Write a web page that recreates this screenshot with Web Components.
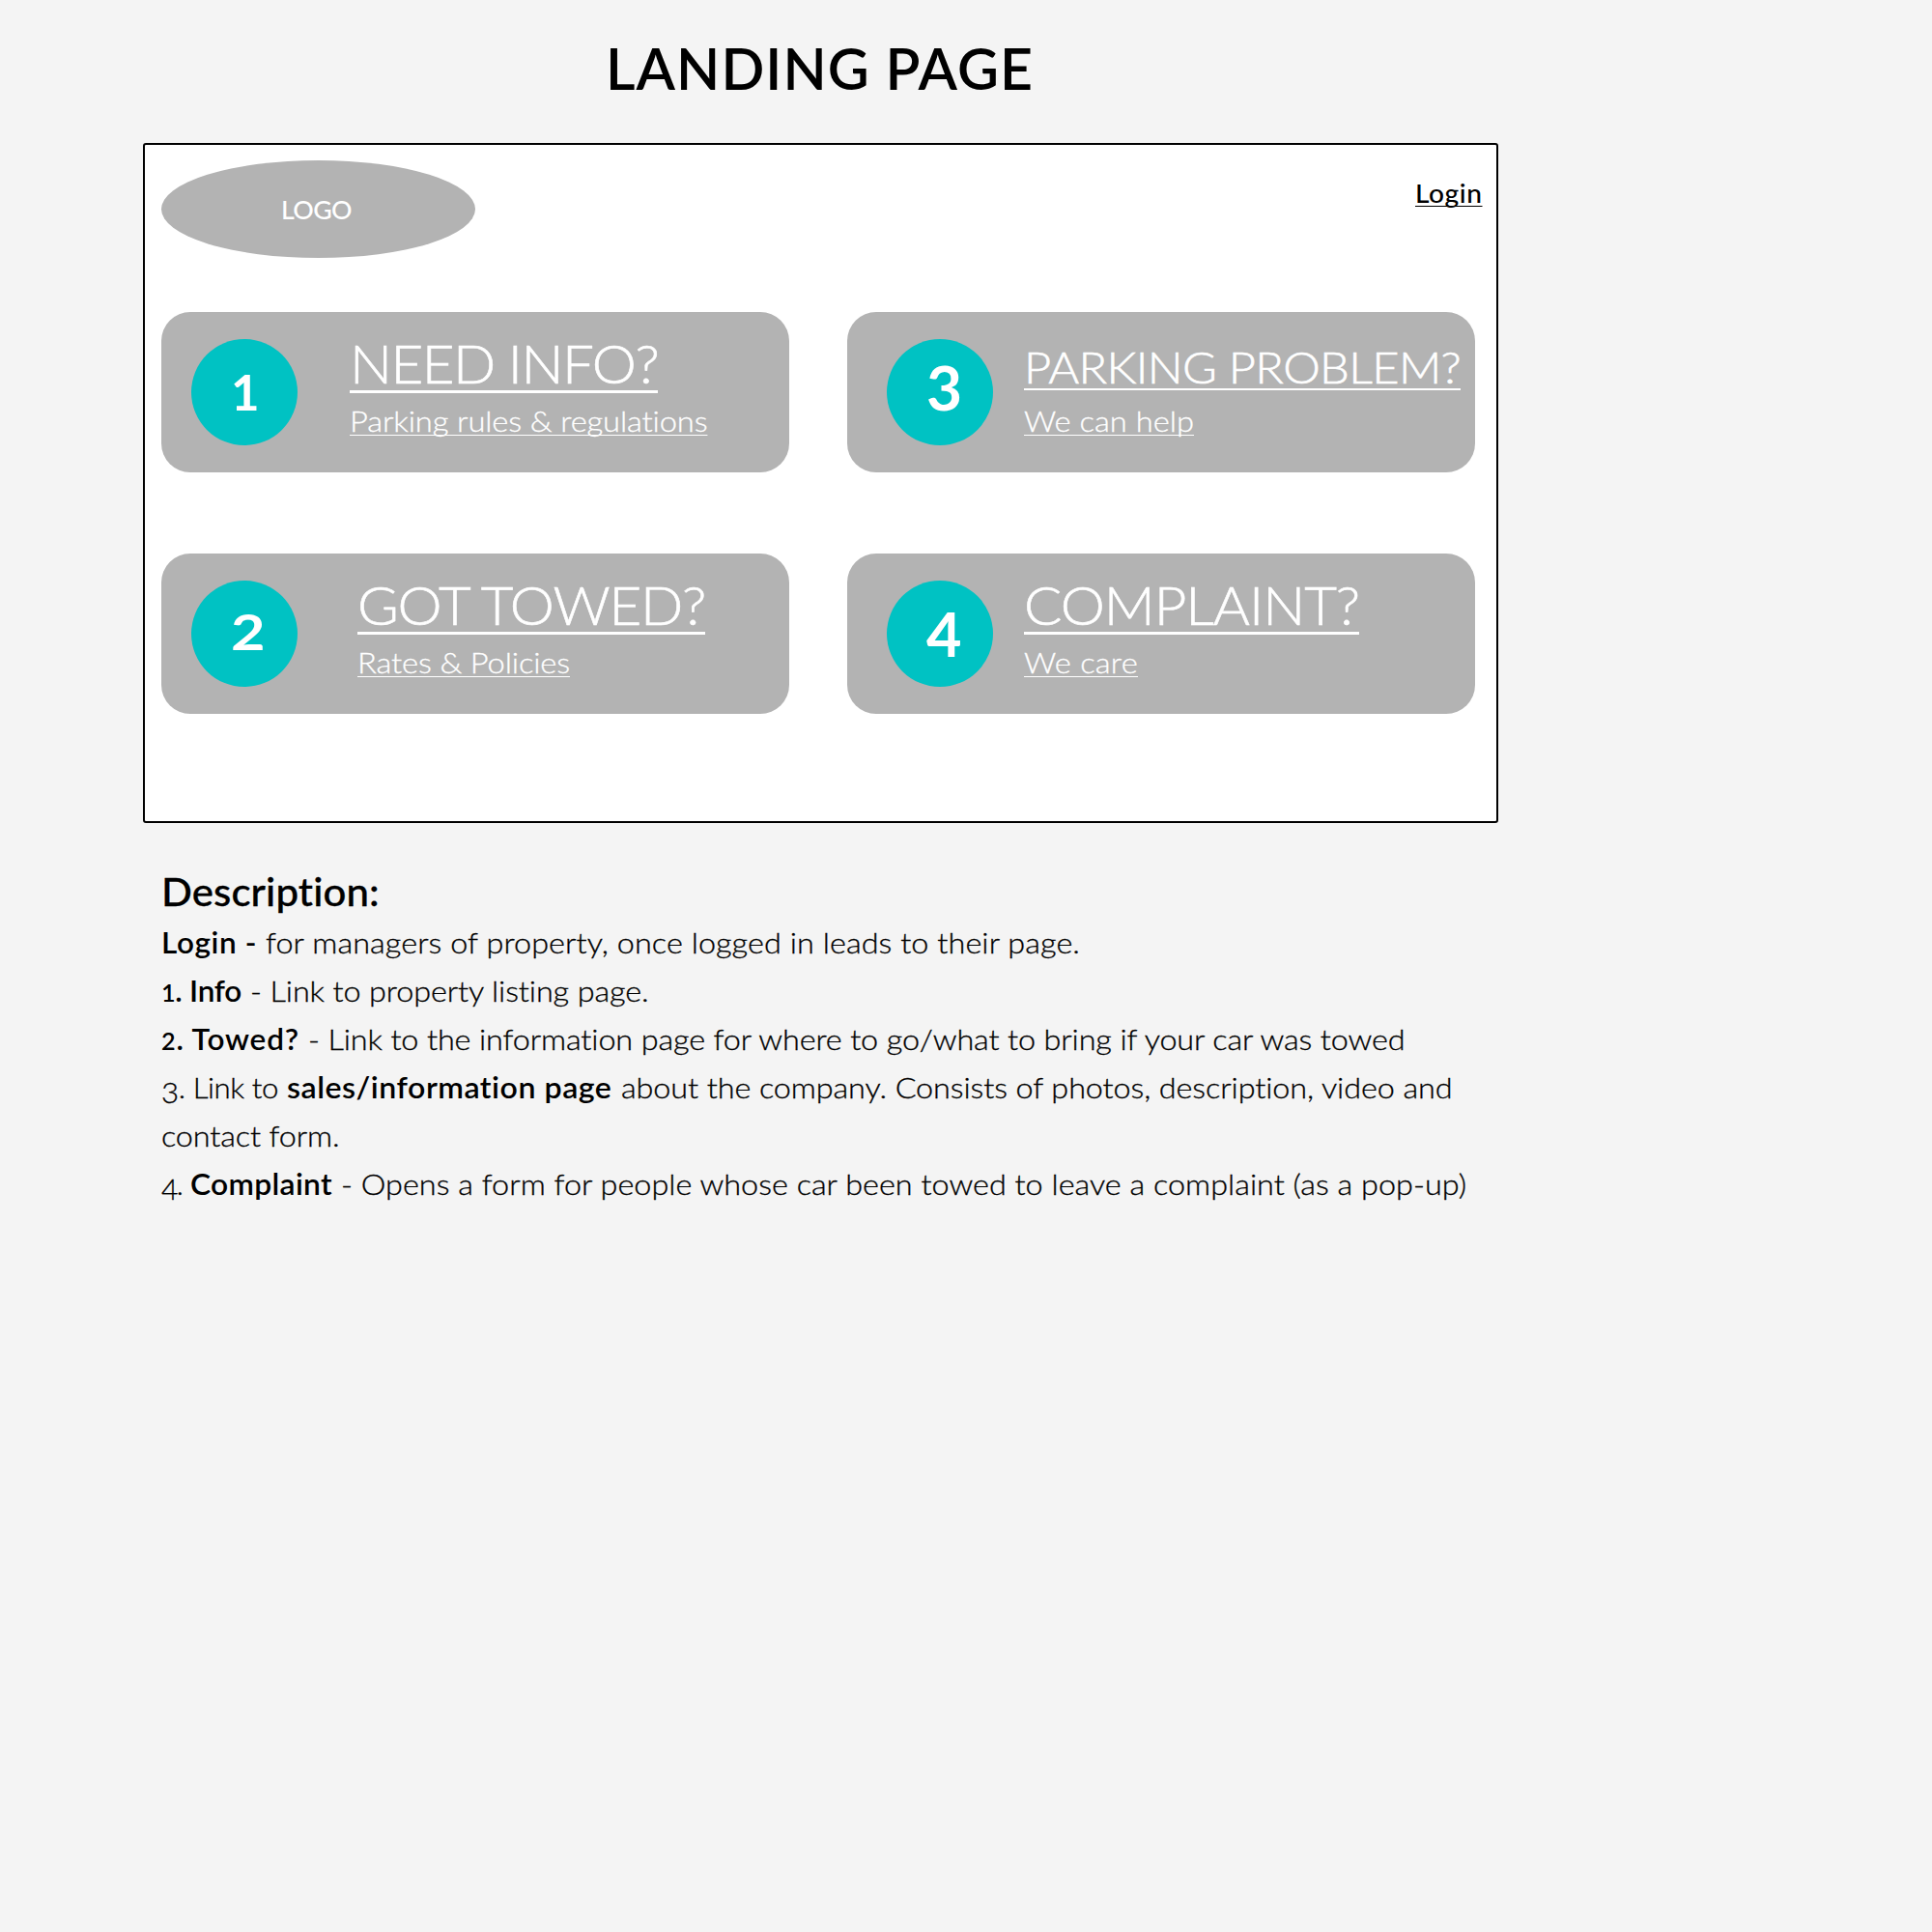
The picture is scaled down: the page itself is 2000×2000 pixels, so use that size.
<!DOCTYPE html>
<html lang="en">
<head>
<meta charset="utf-8">
<title>Landing page</title>
<style>
body{margin:0;background:#f4f4f4;color:#000;font-family:Lato,"Open Sans",sans-serif}
</style>
</head>
<body>
<wire-page></wire-page>
<script>
// A run of text set to a fixed measure: glyphs are stretched by k, the rest is tracking.
class FitRun extends HTMLElement{
  connectedCallback(){
    const r=this.attachShadow({mode:'open'});
    const w=+this.getAttribute('w'),k=+(this.getAttribute('k')||1);
    r.innerHTML=`<style>:host{display:inline-block;white-space:pre;width:${w}px}
      span{display:inline-block;transform-origin:0 50%;text-decoration:var(--line,none);text-decoration-skip-ink:none;text-underline-offset:var(--off,4px);text-decoration-thickness:var(--thick,1px)}
      </style><span><slot></slot></span>`;
    const s=r.querySelector('span');
    const natural=s.getBoundingClientRect().width;
    s.style.letterSpacing=((w/k-natural)/this.textContent.length)+'px';
    if(k!==1)s.style.transform=`scaleX(${k})`;
  }
}

class LinkCard extends HTMLElement{
  connectedCallback(){
    const a=n=>this.getAttribute(n);
    this.attachShadow({mode:'open'}).innerHTML=`<style>
      :host{display:flex;box-sizing:border-box;width:650px;height:166px;border-radius:30px;background:#b3b3b3;color:#fff;padding-left:${a('inset')}px}
      .dot{flex:none;width:110px;height:110px;margin-top:28px;border-radius:50%;background:#00c2c3;box-sizing:border-box;padding-left:${a('nx')}px;padding-top:${a('ny')}px;font-size:${a('ns')}px;line-height:60px;font-weight:700}
      .copy{margin-left:${a('gap')}px;padding-top:23px}
      .head{display:block;height:69px;box-sizing:border-box;font-weight:300;font-size:55px;line-height:60px;-webkit-text-stroke:.6px #fff;--line:underline;--off:7px;--thick:3px}
      .head.small{font-size:46px;line-height:61px;padding-top:3px;--off:5px;--thick:2px}
      .sub{display:block;font-weight:300;font-size:30px;line-height:40px;-webkit-text-stroke:.3px #fff;--line:underline;--off:3px;--thick:1px}
      </style>
      <div class="dot"><fit-run w="${a('nw')}" k="${a('nk')}">${a('n')}</fit-run></div>
      <div class="copy"><div class="head ${a('size')||''}"><fit-run w="${a('tw')}" k="1.06">${a('head')}</fit-run></div>
      <div class="sub"><fit-run w="${a('sw')}" k="1.09">${a('sub').replace('&','&amp;')}</fit-run></div></div>`;
  }
}

class BrowserPanel extends HTMLElement{
  connectedCallback(){
    this.attachShadow({mode:'open'}).innerHTML=`<style>
      :host{display:block;box-sizing:border-box;width:1403px;height:704px;border:2px solid #000;border-radius:3px;background:#fff}
      header{display:flex;justify-content:space-between;padding:16px 15px 0 17px}
      .logo{width:325px;height:101px;border-radius:50%;background:#b3b3b3;color:#fff;font-size:26px;font-weight:500;line-height:30px;text-align:center;box-sizing:border-box;padding:36px 6px 0 0}
      .login{font-size:26px;font-weight:500;line-height:30px;margin-top:19px;--line:underline;--off:3px;--thick:1px}
      main{display:grid;grid-template-columns:650px 650px;column-gap:60px;row-gap:84px;margin:56px 0 0 17px}
      </style>
      <header><div class="logo"><fit-run w="73" k="1.03">LOGO</fit-run></div><div class="login"><fit-run w="69.5" k="1.08">Login</fit-run></div></header>
      <main><slot></slot></main>`;
  }
}

class PageNotes extends HTMLElement{
  connectedCallback(){
    this.attachShadow({mode:'open'}).innerHTML=`<style>
      :host{display:block;font-weight:300;font-size:30px;-webkit-text-stroke:.3px #000}
      h2{margin:0 0 2px;font-size:40px;font-weight:500;line-height:50px}
      .l{display:flex;height:50px;line-height:50px}
      b{font-weight:600;margin-right:9px;-webkit-text-stroke:0}
      i{font-style:normal;font-size:24px;line-height:1}
      .d{font-size:30px;position:relative;top:5px}
      .g{margin-right:9px}
      </style>
      <h2><fit-run w="226.5" k="1.05">Description:</fit-run></h2>
      <div class="l"><b><fit-run w="99" k="1.05">Login -</fit-run></b><fit-run w="843" k="1.08">for managers of property, once logged in leads to their page.</fit-run></div>
      <div class="l"><b><fit-run w="83" k="1.05"><i>1</i>. Info</fit-run></b><fit-run w="413" k="1.08">- Link to property listing page.</fit-run></div>
      <div class="l"><b><fit-run w="143" k="1.05"><i>2</i>. Towed?</fit-run></b><fit-run w="1136" k="1.08">- Link to the information page for where to go/what to bring if your car was towed</fit-run></div>
      <div class="l"><fit-run class="g" w="121" k="1.04"><i class="d">3</i>. Link to</fit-run><b><fit-run w="337" k="1.07">sales/information page</fit-run></b><fit-run w="861" k="1.08">about the company. Consists of photos, description, video and</fit-run></div>
      <div class="l"><fit-run w="184.5" k="1.08">contact form.</fit-run></div>
      <div class="l"><fit-run class="g" w="21"><i class="d">4</i>.</fit-run><b><fit-run w="147" k="1.06">Complaint</fit-run></b><fit-run w="1165" k="1.08">- Opens a form for people whose car been towed to leave a complaint (as a pop-up)</fit-run></div>`;
  }
}

class WirePage extends HTMLElement{
  connectedCallback(){
    this.attachShadow({mode:'open'}).innerHTML=`<style>
      :host{display:block;box-sizing:border-box;width:2000px;height:2000px;padding:41px 0 0 148px;overflow:hidden}
      h1{margin:0 0 47px;width:1401px;text-align:center;font-size:59px;font-weight:600;line-height:60px}
      page-notes{margin:46px 0 0 19px}
      </style>
      <h1><fit-run w="443">LANDING PAGE</fit-run></h1>
      <browser-panel>
        <link-card n="1" inset="31" gap="54" nx="41" ny="25" ns="51" nk="1" nw="30" head="NEED INFO?" tw="319" sub="Parking rules &amp; regulations" sw="371"></link-card>
        <link-card n="3" inset="41" gap="32" nx="41" ny="20" ns="64" nk="1" nw="37" head="PARKING PROBLEM?" tw="452" size="small" sub="We can help" sw="176"></link-card>
        <link-card n="2" inset="31" gap="62" nx="41" ny="22" ns="52" nk="1.18" nw="36" head="GOT TOWED?" tw="360" sub="Rates &amp; Policies" sw="220"></link-card>
        <link-card n="4" inset="41" gap="32" nx="41" ny="25" ns="63" nk="1" nw="36" head="COMPLAINT?" tw="347" sub="We care" sw="118"></link-card>
      </browser-panel>
      <page-notes></page-notes>`;
  }
}
customElements.define('fit-run',FitRun);
customElements.define('link-card',LinkCard);
customElements.define('browser-panel',BrowserPanel);
customElements.define('page-notes',PageNotes);
customElements.define('wire-page',WirePage);
</script>
</body>
</html>
